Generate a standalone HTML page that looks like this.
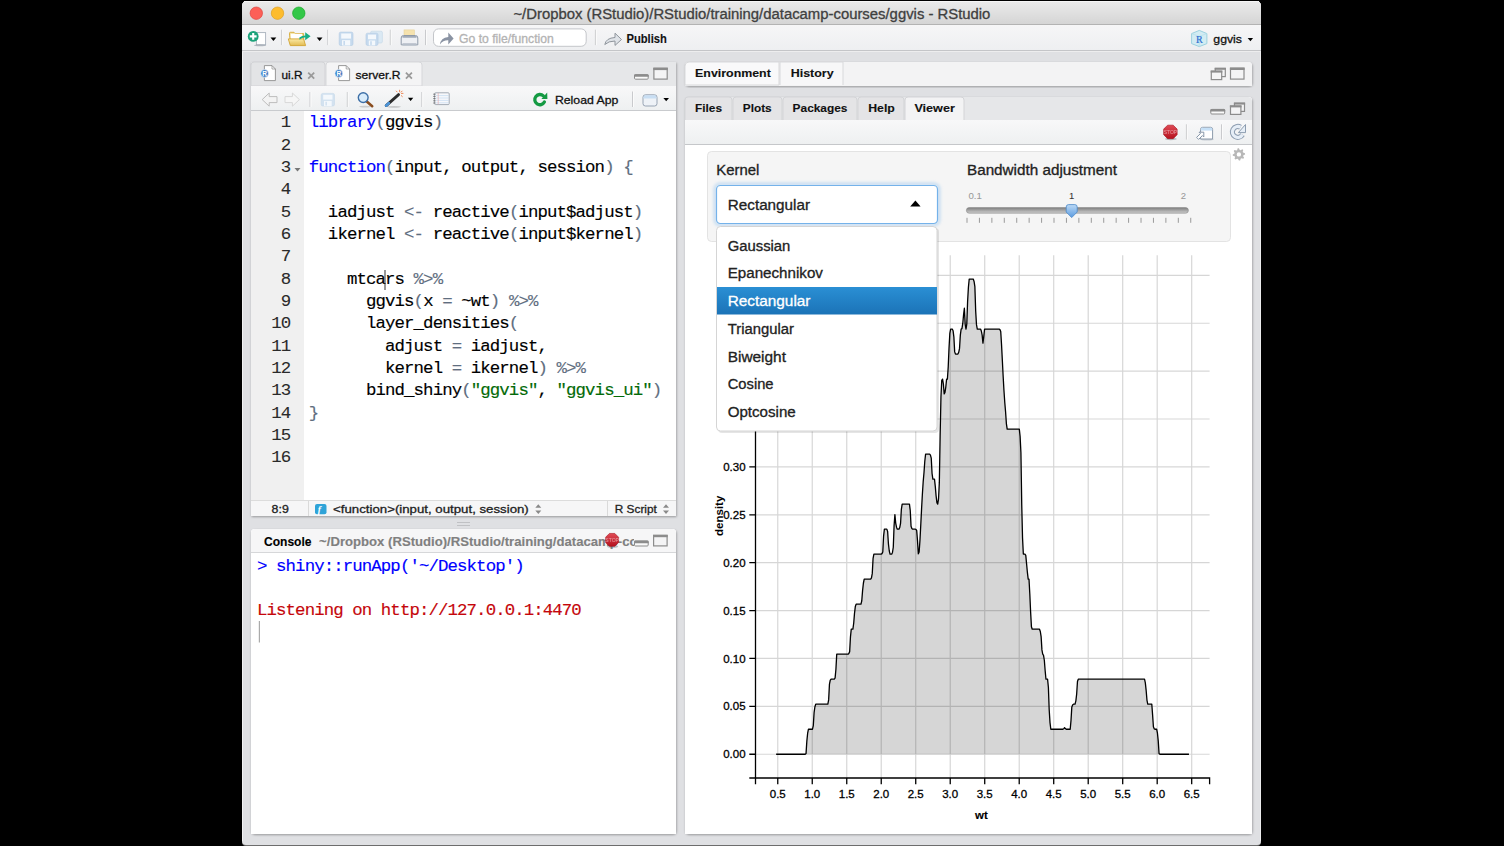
<!DOCTYPE html>
<html><head><meta charset="utf-8"><style>html,body{margin:0;padding:0;width:1504px;height:846px;overflow:hidden;background:#000}</style></head><body>
<svg width="1504" height="846" viewBox="0 0 1504 846" style="position:absolute;left:0;top:0" font-family='"Liberation Sans",sans-serif'>
<defs>
<linearGradient id="gTitle" x1="0" y1="0" x2="0" y2="1"><stop offset="0" stop-color="#ebebeb"/><stop offset="1" stop-color="#d5d5d5"/></linearGradient>
<linearGradient id="gTb" x1="0" y1="0" x2="0" y2="1"><stop offset="0" stop-color="#f6f6f7"/><stop offset="1" stop-color="#eeeff1"/></linearGradient>
<linearGradient id="gPTb" x1="0" y1="0" x2="0" y2="1"><stop offset="0" stop-color="#f8f8f9"/><stop offset="1" stop-color="#eef0f1"/></linearGradient>
<linearGradient id="gSel" x1="0" y1="0" x2="0" y2="1"><stop offset="0" stop-color="#2a8fd4"/><stop offset="1" stop-color="#1b73b7"/></linearGradient>
<linearGradient id="gStop" x1="0" y1="0" x2="0" y2="1"><stop offset="0" stop-color="#e04a55"/><stop offset="1" stop-color="#b5121f"/></linearGradient>
<linearGradient id="gFolder" x1="0" y1="0" x2="0" y2="1"><stop offset="0" stop-color="#fbeaa6"/><stop offset="1" stop-color="#e2bb52"/></linearGradient>
<linearGradient id="gSlider" x1="0" y1="0" x2="0" y2="1"><stop offset="0" stop-color="#7d7d7d"/><stop offset="1" stop-color="#cfcfcf"/></linearGradient>
<linearGradient id="gHandle" x1="0" y1="0" x2="0" y2="1"><stop offset="0" stop-color="#bcd9f5"/><stop offset="1" stop-color="#5a9be0"/></linearGradient>
<clipPath id="cpCon"><rect x="251" y="529" width="383" height="23"/></clipPath>
<filter id="glow" x="-10%" y="-30%" width="120%" height="160%"><feGaussianBlur stdDeviation="1.6"/></filter><filter id="sh" x="-5%" y="-5%" width="110%" height="110%"><feDropShadow dx="0.6" dy="1" stdDeviation="1.1" flood-color="#000" flood-opacity="0.32"/></filter>
</defs>
<rect x="0" y="0" width="1504" height="846" fill="#000" />
<path d="M242,842 V6 Q242,1 247,1 H1256 Q1261,1 1261,6 V842 Q1261,846 1257,846 H246 Q242,846 242,842 Z" fill="#6d6d6d"/>
<path d="M242,841 V6 Q242,1 247,1 H1256 Q1261,1 1261,6 V841 Q1261,845 1257,845 H246 Q242,845 242,841 Z" fill="#dfe0e3"/>
<path d="M242.5,841 V6" stroke="#f2f2f3" stroke-width="1"/>
<path d="M1260.5,841 V6" stroke="#ececed" stroke-width="1"/>
<path d="M242,24 V6 Q242,1 247,1 H1256 Q1261,1 1261,6 V24 Z" fill="url(#gTitle)"/>
<path d="M244,1.5 Q245,1.5 247,1.5 H1256 Q1258,1.5 1259,1.5" stroke="#f6f6f6" stroke-width="1"/>
<rect x="242" y="24" width="1019" height="1" fill="#b3b3b3" />
<circle cx="256.3" cy="13.2" r="6.2" fill="#fc5f57" stroke="#e0443e" stroke-width="0.7"/>
<circle cx="277.5" cy="13.2" r="6.2" fill="#fdbc2e" stroke="#dea123" stroke-width="0.7"/>
<circle cx="298.8" cy="13.2" r="6.2" fill="#33c748" stroke="#1aab29" stroke-width="0.7"/>
<text x="751.9" y="19.0" font-size="14" fill="#404040" text-anchor="middle" textLength="477" lengthAdjust="spacingAndGlyphs"  stroke="#404040" stroke-width="0.3">~/Dropbox (RStudio)/RStudio/training/datacamp-courses/ggvis - RStudio</text>
<rect x="242" y="25" width="1019" height="25" fill="url(#gTb)" />
<rect x="242" y="50" width="1019" height="1" fill="#c4c5c8" />
<rect x="242" y="51" width="1019" height="1" fill="#ededee" />
<rect x="256.4" y="32.6" width="9.2" height="12.2" fill="#fff" stroke="#a8b1bc" stroke-width="0.9"/>
<ellipse cx="260" cy="45.4" rx="6" ry="0.9" fill="#7d8896" opacity="0.5"/>
<circle cx="253.2" cy="36.4" r="5.4" fill="#1ca27a"/>
<path d="M253.2,33 V39.8 M249.8,36.4 H256.6" stroke="#fff" stroke-width="2.1"/>
<path d="M270.50,37.45 H276.30 L273.40,40.95 Z" fill="#000"/>
<rect x="281.2" y="29.7" width="1" height="15.400000000000002" fill="#c9cacd"/><rect x="282.2" y="29.7" width="1" height="15.400000000000002" fill="#fbfbfb"/>
<path d="M289.5,35.2 L289.5,33.2 Q289.5,32.3 290.4,32.3 H294 L295.3,33.6 H303.6 V44.8 H290.8 Z" fill="#f4e3a2" stroke="#d6a935" stroke-width="0.9"/>
<path d="M290.8,33.8 H302 V40 H290.8 Z" fill="#fff"/>
<path d="M288.3,38.9 H303.6 L305.6,45.6 H290.3 Z" fill="url(#gFolder)" stroke="#d2a432" stroke-width="0.9"/>
<path d="M299.4,37.5 Q302,35.5 305.2,35.5 V32.2 L310.6,36.3 L305.2,40.3 V37.3 Q302,37.3 299.4,39.8 Z" fill="#17ae83"/>
<path d="M316.70,37.45 H322.50 L319.60,40.95 Z" fill="#000"/>
<rect x="327.3" y="29.7" width="1" height="15.400000000000002" fill="#c9cacd"/><rect x="328.3" y="29.7" width="1" height="15.400000000000002" fill="#fbfbfb"/>
<rect x="339.2" y="32.1" width="13.8" height="13.4" rx="1.6" fill="#c6daee" stroke="#b3cbe3" stroke-width="0.6"/><rect x="341.2" y="33.5" width="9.8" height="5.09" fill="#f4f8fc"/><rect x="342.0" y="40.14" width="8.20" height="5.36" fill="#f4f8fc"/><rect x="343.4" y="40.94" width="1.6" height="4.02" fill="#c6daee"/>
<rect x="370.6" y="31.2" width="11.8" height="11.8" rx="1.4" fill="#dbe9f4" stroke="#c3d6e6" stroke-width="0.6"/>
<rect x="366" y="33.2" width="12" height="12.2" rx="1.6" fill="#c6daee" stroke="#b3cbe3" stroke-width="0.6"/><rect x="368" y="34.6" width="8" height="4.64" fill="#f4f8fc"/><rect x="368.8" y="40.52" width="6.40" height="4.88" fill="#f4f8fc"/><rect x="370.2" y="41.25" width="1.6" height="3.66" fill="#c6daee"/>
<rect x="389.8" y="29.7" width="1" height="15.400000000000002" fill="#c9cacd"/><rect x="390.8" y="29.7" width="1" height="15.400000000000002" fill="#fbfbfb"/>
<rect x="404" y="29.9" width="10.5" height="8.5" fill="#f5e2ae" stroke="#e4cf95" stroke-width="0.5"/>
<path d="M401.2,38 Q401.2,35.5 403.5,35.5 H415.5 Q417.8,35.5 417.8,38 V44.8 H401.2 Z" fill="#eef0f4" stroke="#8e99a8" stroke-width="1"/>
<rect x="402.5" y="36.2" width="14" height="1.4" fill="#8e99a8"/>
<rect x="402.5" y="43.2" width="14" height="2.4" fill="#b7bfca"/>
<rect x="425.0" y="29.7" width="1" height="15.400000000000002" fill="#c9cacd"/><rect x="426.0" y="29.7" width="1" height="15.400000000000002" fill="#fbfbfb"/>
<rect x="433.5" y="28.9" width="152.7" height="17.4" rx="5" fill="#fff" stroke="#c4c6ca" stroke-width="1"/>
<path d="M440,44.4 Q440.6,38 448.3,37 V32.4 L453.6,38.5 L448.3,44.5 V40.2 Q443,40 440,44.4 Z" fill="#8a93a3"/>
<text x="459" y="42.7" font-size="12" fill="#b3b3b3" textLength="94.8" lengthAdjust="spacingAndGlyphs" stroke="#b3b3b3" stroke-width="0.3">Go to file/function</text>
<rect x="594.9" y="29.7" width="1" height="15.400000000000002" fill="#c9cacd"/><rect x="595.9" y="29.7" width="1" height="15.400000000000002" fill="#fbfbfb"/>
<path d="M604.8,44.5 Q606,38 615,37.5 V33.2 L621.5,39.5 L615,45.4 V41 Q608.5,41 604.8,44.5 Z" fill="#dfe3e8" stroke="#8f959c" stroke-width="1"/>
<text x="626.5" y="42.7" font-size="12" font-weight="bold" fill="#111" textLength="40.4" lengthAdjust="spacingAndGlyphs" stroke="#111" stroke-width="0.12">Publish</text>
<path d="M1199.3,30.4 L1206.9,33.6 V43.6 L1199.3,46.6 L1191.6,43.6 V33.6 Z" fill="#d2ecf3" stroke="#9bd1df" stroke-width="1"/>
<path d="M1191.6,33.6 L1199.3,36.4 L1206.9,33.6 M1199.3,36.4 V46.6" stroke="#b5dfea" stroke-width="0.7" fill="none"/>
<text x="1199.3" y="42.6" font-size="10" fill="#2e6fd1" stroke="#2e6fd1" stroke-width="0.2" text-anchor="middle" font-family='"Liberation Serif",serif'>R</text>
<text x="1213.3" y="42.6" font-size="11.6" fill="#111" textLength="28.7" lengthAdjust="spacingAndGlyphs" stroke="#111" stroke-width="0.3">ggvis</text>
<path d="M1247.70,38.10 H1253.10 L1250.40,41.30 Z" fill="#000"/>
<rect x="251" y="62" width="425" height="454" fill="#fff" filter="url(#sh)"/>
<rect x="251" y="62" width="425" height="454" fill="#fff" />
<rect x="251" y="62" width="425" height="24" fill="#e6e7e9" />
<path d="M251,86 V65 Q251,62 254,62 H322 Q325,62 325,65 V86 Z" fill="#e3e4e6" stroke="#d2d3d6" stroke-width="1"/>
<path d="M326,86 V65 Q326,62 329,62 H419 Q422,62 422,65 V86 Z" fill="#f4f4f5" stroke="#d6d7da" stroke-width="1"/>
<text x="281.5" y="79.2" font-size="11.5" fill="#111" textLength="21" lengthAdjust="spacingAndGlyphs"  stroke="#111" stroke-width="0.3">ui.R</text>
<text x="355.5" y="79.2" font-size="11.5" fill="#111" textLength="45" lengthAdjust="spacingAndGlyphs"  stroke="#111" stroke-width="0.3">server.R</text>
<path d="M308.2,72.6 L314.2,78.6 M314.2,72.6 L308.2,78.6" stroke="#9a9a9a" stroke-width="1.8"/>
<path d="M405.9,72.6 L411.9,78.6 M411.9,72.6 L405.9,78.6" stroke="#9a9a9a" stroke-width="1.8"/>
<rect x="251" y="86" width="425" height="24" fill="url(#gPTb)" />
<rect x="251" y="110" width="425" height="1" fill="#c9cbce" />
<text x="554.9" y="103.8" font-size="11.6" fill="#111" textLength="63.5" lengthAdjust="spacingAndGlyphs"  stroke="#111" stroke-width="0.3">Reload App</text>
<rect x="251" y="111" width="53" height="389" fill="#f0f0f0" />
<text x="290.2" y="127.3" font-size="17.4" letter-spacing="-0.91" fill="#2a2a2a" stroke="#2a2a2a" stroke-width="0.1" text-anchor="end" font-family='"Liberation Mono",monospace'>1</text>
<text x="308.8" y="127.3" font-size="17.4" letter-spacing="-0.91" xml:space="preserve" font-family='"Liberation Mono",monospace'><tspan fill="#0000ff" stroke="#0000ff" stroke-width="0.15">library</tspan><tspan fill="#5f6e80" stroke="#5f6e80" stroke-width="0.15">(</tspan><tspan fill="#000" stroke="#000" stroke-width="0.15">ggvis</tspan><tspan fill="#5f6e80" stroke="#5f6e80" stroke-width="0.15">)</tspan></text>
<text x="290.2" y="149.6" font-size="17.4" letter-spacing="-0.91" fill="#2a2a2a" stroke="#2a2a2a" stroke-width="0.1" text-anchor="end" font-family='"Liberation Mono",monospace'>2</text>
<text x="290.2" y="172.0" font-size="17.4" letter-spacing="-0.91" fill="#2a2a2a" stroke="#2a2a2a" stroke-width="0.1" text-anchor="end" font-family='"Liberation Mono",monospace'>3</text>
<text x="308.8" y="172.0" font-size="17.4" letter-spacing="-0.91" xml:space="preserve" font-family='"Liberation Mono",monospace'><tspan fill="#0000ff" stroke="#0000ff" stroke-width="0.15">function</tspan><tspan fill="#5f6e80" stroke="#5f6e80" stroke-width="0.15">(</tspan><tspan fill="#000" stroke="#000" stroke-width="0.15">input, output, session</tspan><tspan fill="#5f6e80" stroke="#5f6e80" stroke-width="0.15">)</tspan><tspan fill="#000" stroke="#000" stroke-width="0.15"> </tspan><tspan fill="#5f6e80" stroke="#5f6e80" stroke-width="0.15">{</tspan></text>
<text x="290.2" y="194.3" font-size="17.4" letter-spacing="-0.91" fill="#2a2a2a" stroke="#2a2a2a" stroke-width="0.1" text-anchor="end" font-family='"Liberation Mono",monospace'>4</text>
<text x="290.2" y="216.6" font-size="17.4" letter-spacing="-0.91" fill="#2a2a2a" stroke="#2a2a2a" stroke-width="0.1" text-anchor="end" font-family='"Liberation Mono",monospace'>5</text>
<text x="308.8" y="216.6" font-size="17.4" letter-spacing="-0.91" xml:space="preserve" font-family='"Liberation Mono",monospace'><tspan fill="#000" stroke="#000" stroke-width="0.15">  iadjust </tspan><tspan fill="#5f6e80" stroke="#5f6e80" stroke-width="0.15">&lt;-</tspan><tspan fill="#000" stroke="#000" stroke-width="0.15"> reactive</tspan><tspan fill="#5f6e80" stroke="#5f6e80" stroke-width="0.15">(</tspan><tspan fill="#000" stroke="#000" stroke-width="0.15">input$adjust</tspan><tspan fill="#5f6e80" stroke="#5f6e80" stroke-width="0.15">)</tspan></text>
<text x="290.2" y="238.9" font-size="17.4" letter-spacing="-0.91" fill="#2a2a2a" stroke="#2a2a2a" stroke-width="0.1" text-anchor="end" font-family='"Liberation Mono",monospace'>6</text>
<text x="308.8" y="238.9" font-size="17.4" letter-spacing="-0.91" xml:space="preserve" font-family='"Liberation Mono",monospace'><tspan fill="#000" stroke="#000" stroke-width="0.15">  ikernel </tspan><tspan fill="#5f6e80" stroke="#5f6e80" stroke-width="0.15">&lt;-</tspan><tspan fill="#000" stroke="#000" stroke-width="0.15"> reactive</tspan><tspan fill="#5f6e80" stroke="#5f6e80" stroke-width="0.15">(</tspan><tspan fill="#000" stroke="#000" stroke-width="0.15">input$kernel</tspan><tspan fill="#5f6e80" stroke="#5f6e80" stroke-width="0.15">)</tspan></text>
<text x="290.2" y="261.3" font-size="17.4" letter-spacing="-0.91" fill="#2a2a2a" stroke="#2a2a2a" stroke-width="0.1" text-anchor="end" font-family='"Liberation Mono",monospace'>7</text>
<text x="290.2" y="283.6" font-size="17.4" letter-spacing="-0.91" fill="#2a2a2a" stroke="#2a2a2a" stroke-width="0.1" text-anchor="end" font-family='"Liberation Mono",monospace'>8</text>
<text x="308.8" y="283.6" font-size="17.4" letter-spacing="-0.91" xml:space="preserve" font-family='"Liberation Mono",monospace'><tspan fill="#000" stroke="#000" stroke-width="0.15">    mtcars </tspan><tspan fill="#5f6e80" stroke="#5f6e80" stroke-width="0.15">%&gt;%</tspan></text>
<text x="290.2" y="305.9" font-size="17.4" letter-spacing="-0.91" fill="#2a2a2a" stroke="#2a2a2a" stroke-width="0.1" text-anchor="end" font-family='"Liberation Mono",monospace'>9</text>
<text x="308.8" y="305.9" font-size="17.4" letter-spacing="-0.91" xml:space="preserve" font-family='"Liberation Mono",monospace'><tspan fill="#000" stroke="#000" stroke-width="0.15">      ggvis</tspan><tspan fill="#5f6e80" stroke="#5f6e80" stroke-width="0.15">(</tspan><tspan fill="#000" stroke="#000" stroke-width="0.15">x </tspan><tspan fill="#5f6e80" stroke="#5f6e80" stroke-width="0.15">=</tspan><tspan fill="#000" stroke="#000" stroke-width="0.15"> ~wt</tspan><tspan fill="#5f6e80" stroke="#5f6e80" stroke-width="0.15">)</tspan><tspan fill="#000" stroke="#000" stroke-width="0.15"> </tspan><tspan fill="#5f6e80" stroke="#5f6e80" stroke-width="0.15">%&gt;%</tspan></text>
<text x="290.2" y="328.3" font-size="17.4" letter-spacing="-0.91" fill="#2a2a2a" stroke="#2a2a2a" stroke-width="0.1" text-anchor="end" font-family='"Liberation Mono",monospace'>10</text>
<text x="308.8" y="328.3" font-size="17.4" letter-spacing="-0.91" xml:space="preserve" font-family='"Liberation Mono",monospace'><tspan fill="#000" stroke="#000" stroke-width="0.15">      layer_densities</tspan><tspan fill="#5f6e80" stroke="#5f6e80" stroke-width="0.15">(</tspan></text>
<text x="290.2" y="350.6" font-size="17.4" letter-spacing="-0.91" fill="#2a2a2a" stroke="#2a2a2a" stroke-width="0.1" text-anchor="end" font-family='"Liberation Mono",monospace'>11</text>
<text x="308.8" y="350.6" font-size="17.4" letter-spacing="-0.91" xml:space="preserve" font-family='"Liberation Mono",monospace'><tspan fill="#000" stroke="#000" stroke-width="0.15">        adjust </tspan><tspan fill="#5f6e80" stroke="#5f6e80" stroke-width="0.15">=</tspan><tspan fill="#000" stroke="#000" stroke-width="0.15"> iadjust,</tspan></text>
<text x="290.2" y="372.9" font-size="17.4" letter-spacing="-0.91" fill="#2a2a2a" stroke="#2a2a2a" stroke-width="0.1" text-anchor="end" font-family='"Liberation Mono",monospace'>12</text>
<text x="308.8" y="372.9" font-size="17.4" letter-spacing="-0.91" xml:space="preserve" font-family='"Liberation Mono",monospace'><tspan fill="#000" stroke="#000" stroke-width="0.15">        kernel </tspan><tspan fill="#5f6e80" stroke="#5f6e80" stroke-width="0.15">=</tspan><tspan fill="#000" stroke="#000" stroke-width="0.15"> ikernel</tspan><tspan fill="#5f6e80" stroke="#5f6e80" stroke-width="0.15">)</tspan><tspan fill="#000" stroke="#000" stroke-width="0.15"> </tspan><tspan fill="#5f6e80" stroke="#5f6e80" stroke-width="0.15">%&gt;%</tspan></text>
<text x="290.2" y="395.3" font-size="17.4" letter-spacing="-0.91" fill="#2a2a2a" stroke="#2a2a2a" stroke-width="0.1" text-anchor="end" font-family='"Liberation Mono",monospace'>13</text>
<text x="308.8" y="395.3" font-size="17.4" letter-spacing="-0.91" xml:space="preserve" font-family='"Liberation Mono",monospace'><tspan fill="#000" stroke="#000" stroke-width="0.15">      bind_shiny</tspan><tspan fill="#5f6e80" stroke="#5f6e80" stroke-width="0.15">(</tspan><tspan fill="#036a07" stroke="#036a07" stroke-width="0.15">"ggvis"</tspan><tspan fill="#000" stroke="#000" stroke-width="0.15">, </tspan><tspan fill="#036a07" stroke="#036a07" stroke-width="0.15">"ggvis_ui"</tspan><tspan fill="#5f6e80" stroke="#5f6e80" stroke-width="0.15">)</tspan></text>
<text x="290.2" y="417.6" font-size="17.4" letter-spacing="-0.91" fill="#2a2a2a" stroke="#2a2a2a" stroke-width="0.1" text-anchor="end" font-family='"Liberation Mono",monospace'>14</text>
<text x="308.8" y="417.6" font-size="17.4" letter-spacing="-0.91" xml:space="preserve" font-family='"Liberation Mono",monospace'><tspan fill="#5f6e80" stroke="#5f6e80" stroke-width="0.15">}</tspan></text>
<text x="290.2" y="439.9" font-size="17.4" letter-spacing="-0.91" fill="#2a2a2a" stroke="#2a2a2a" stroke-width="0.1" text-anchor="end" font-family='"Liberation Mono",monospace'>15</text>
<text x="290.2" y="462.2" font-size="17.4" letter-spacing="-0.91" fill="#2a2a2a" stroke="#2a2a2a" stroke-width="0.1" text-anchor="end" font-family='"Liberation Mono",monospace'>16</text>
<path d="M294.5,168 L300.5,168 L297.5,171.5 Z" fill="#777"/>
<rect x="384.5" y="270" width="1" height="20" fill="#333"/>
<rect x="251" y="500" width="425" height="1" fill="#dcdcdc" />
<rect x="251" y="501" width="425" height="15" fill="#f6f6f7" />
<rect x="308" y="501" width="1" height="15" fill="#dadada" />
<rect x="607" y="501" width="1" height="15" fill="#dadada" />
<text x="271.6" y="513" font-size="11" fill="#222" textLength="17.2" lengthAdjust="spacingAndGlyphs"  stroke="#222" stroke-width="0.3">8:9</text>
<rect x="315" y="504" width="11.5" height="10.2" rx="2" fill="#2fa3d8"/>
<text x="317.8" y="512.6" font-size="9.5" font-style="italic" font-weight="bold" fill="#fff" font-family='"Liberation Serif",serif' stroke="#fff" stroke-width="0.05">f</text>
<text x="333.1" y="513" font-size="11" fill="#222" textLength="195.7" lengthAdjust="spacingAndGlyphs"  stroke="#222" stroke-width="0.3">&lt;function&gt;(input, output, session)</text>
<text x="614.8" y="513" font-size="11" fill="#222" textLength="42" lengthAdjust="spacingAndGlyphs"  stroke="#222" stroke-width="0.3">R Script</text>
<path d="M535.3,507.8 L538.3,504.3 L541.3,507.8 Z M535.3,510.6 L538.3,514.1 L541.3,510.6 Z" fill="#8a8a8a"/>
<path d="M663,507.8 L666,504.3 L669,507.8 Z M663,510.6 L666,514.1 L669,510.6 Z" fill="#8a8a8a"/>
<rect x="457" y="522" width="13" height="1" fill="#c0c1c4" />
<rect x="457" y="525" width="13" height="1" fill="#c0c1c4" />
<rect x="251" y="529" width="425" height="305" fill="#fff" rx="4" filter="url(#sh)"/>
<path d="M251,834 V533 Q251,529 255,529 H672 Q676,529 676,533 V834 Z" fill="#fff"/>
<path d="M251,552 V533 Q251,529 255,529 H672 Q676,529 676,533 V552 Z" fill="#f6f6f7"/>
<rect x="251" y="552" width="425" height="1" fill="#d6d7d9" />
<text x="264" y="546" font-size="12" fill="#000" font-weight="bold" textLength="47.5" lengthAdjust="spacingAndGlyphs"  stroke="#000" stroke-width="0.12">Console</text>
<text x="319.1" y="546" font-size="12" fill="#808080" font-weight="bold" textLength="395" lengthAdjust="spacingAndGlyphs" clip-path="url(#cpCon)" stroke="#808080" stroke-width="0.12">~/Dropbox (RStudio)/RStudio/training/datacamp-courses/ggvis/</text>
<text x="257" y="571" font-size="17.4" letter-spacing="-0.91" fill="#0000ff" stroke="#0000ff" stroke-width="0.15" xml:space="preserve" font-family='"Liberation Mono",monospace'>&gt; shiny::runApp('~/Desktop')</text>
<text x="257" y="614.7" font-size="17.4" letter-spacing="-0.91" fill="#c5060b" stroke="#c5060b" stroke-width="0.15" xml:space="preserve" font-family='"Liberation Mono",monospace'>Listening on http://127.0.0.1:4470</text>
<rect x="258.8" y="621" width="1.2" height="21.5" fill="#aaa"/>
<rect x="685" y="62" width="567" height="24" fill="#fff" rx="4" filter="url(#sh)"/>
<path d="M685,86 V66 Q685,62 689,62 H1248 Q1252,62 1252,66 V86 Z" fill="#f3f3f4"/>
<path d="M685,85 V66 Q685,62 689,62 H779 V85 Z" fill="#f9f9fa" stroke="#d8d9db" stroke-width="1"/>
<path d="M780,85 V62 H843 V85" fill="#f7f7f8" stroke="#d8d9db" stroke-width="1"/>
<text x="695.1" y="76.8" font-size="11.6" fill="#111" font-weight="bold" textLength="75.7" lengthAdjust="spacingAndGlyphs"  stroke="#111" stroke-width="0.12">Environment</text>
<text x="790.7" y="76.8" font-size="11.6" fill="#111" font-weight="bold" textLength="42.9" lengthAdjust="spacingAndGlyphs"  stroke="#111" stroke-width="0.12">History</text>
<rect x="685" y="97" width="567" height="737" fill="#fff" rx="4" filter="url(#sh)"/>
<path d="M685,834 V101 Q685,97 689,97 H1248 Q1252,97 1252,101 V834 Z" fill="#fff"/>
<path d="M685,120 V101 Q685,97 689,97 H1248 Q1252,97 1252,101 V120 Z" fill="#e6e7e9"/>
<path d="M685,120 V100 Q685,97 688,97 H729 Q732,97 732,100 V120" fill="#e4e4e6" stroke="#d3d4d7" stroke-width="1"/>
<text x="695" y="111.8" font-size="11.6" fill="#111" font-weight="bold" textLength="27" lengthAdjust="spacingAndGlyphs"  stroke="#111" stroke-width="0.12">Files</text>
<path d="M733,120 V100 Q733,97 736,97 H779 Q782,97 782,100 V120" fill="#e4e4e6" stroke="#d3d4d7" stroke-width="1"/>
<text x="742.8" y="111.8" font-size="11.6" fill="#111" font-weight="bold" textLength="28.9" lengthAdjust="spacingAndGlyphs"  stroke="#111" stroke-width="0.12">Plots</text>
<path d="M783,120 V100 Q783,97 786,97 H854 Q857,97 857,100 V120" fill="#e4e4e6" stroke="#d3d4d7" stroke-width="1"/>
<text x="792.6" y="111.8" font-size="11.6" fill="#111" font-weight="bold" textLength="54.9" lengthAdjust="spacingAndGlyphs"  stroke="#111" stroke-width="0.12">Packages</text>
<path d="M858,120 V100 Q858,97 861,97 H901 Q904,97 904,100 V120" fill="#e4e4e6" stroke="#d3d4d7" stroke-width="1"/>
<text x="868.2" y="111.8" font-size="11.6" fill="#111" font-weight="bold" textLength="26.6" lengthAdjust="spacingAndGlyphs"  stroke="#111" stroke-width="0.12">Help</text>
<path d="M905,120 V100 Q905,97 908,97 H961 Q964,97 964,100 V120" fill="#f3f3f4" stroke="#d3d4d7" stroke-width="1"/>
<text x="914.4" y="111.8" font-size="11.6" fill="#111" font-weight="bold" textLength="40.5" lengthAdjust="spacingAndGlyphs"  stroke="#111" stroke-width="0.12">Viewer</text>
<rect x="685" y="120" width="567" height="24" fill="url(#gPTb)" />
<rect x="685" y="144" width="567" height="1" fill="#c5c7ca" />
<path d="M776.14,754.24 L776.14,754.24 L776.95,754.24 L777.76,754.24 L778.56,754.24 L779.37,754.24 L780.18,754.24 L780.99,754.24 L781.80,754.24 L782.60,754.24 L783.41,754.24 L784.22,754.24 L785.03,754.24 L785.84,754.24 L786.64,754.24 L787.45,754.24 L788.26,754.24 L789.07,754.24 L789.87,754.24 L790.68,754.24 L791.49,754.24 L792.30,754.24 L793.11,754.24 L793.91,754.24 L794.72,754.24 L795.53,754.24 L796.34,754.24 L797.15,754.24 L797.95,754.24 L798.76,754.24 L799.57,754.24 L800.38,754.24 L801.18,754.24 L801.99,754.24 L802.80,754.24 L803.61,754.24 L804.42,754.24 L805.22,754.24 L806.03,753.61 L806.84,741.09 L807.65,733.24 L808.46,729.23 L809.26,729.23 L810.07,729.23 L810.88,729.23 L811.69,729.23 L812.49,729.23 L813.30,725.54 L814.11,712.30 L814.92,706.72 L815.73,704.22 L816.53,704.22 L817.34,704.22 L818.15,704.22 L818.96,704.22 L819.77,704.22 L820.57,704.22 L821.38,704.22 L822.19,704.22 L823.00,704.22 L823.80,704.22 L824.61,704.22 L825.42,704.22 L826.23,704.22 L827.04,704.22 L827.84,704.22 L828.65,699.88 L829.46,684.11 L830.27,680.08 L831.08,679.21 L831.88,679.21 L832.69,679.21 L833.50,679.21 L834.31,679.21 L835.11,677.88 L835.92,669.28 L836.73,654.20 L837.54,654.20 L838.35,654.20 L839.15,654.20 L839.96,654.20 L840.77,654.20 L841.58,654.20 L842.39,654.20 L843.19,654.20 L844.00,654.20 L844.81,654.20 L845.62,654.20 L846.43,654.20 L847.23,654.20 L848.04,654.20 L848.85,653.44 L849.66,651.64 L850.46,636.86 L851.27,629.19 L852.08,629.19 L852.89,629.19 L853.70,623.28 L854.50,613.40 L855.31,606.57 L856.12,604.18 L856.93,604.18 L857.74,604.18 L858.54,604.18 L859.35,604.18 L860.16,604.18 L860.97,604.18 L861.77,600.73 L862.58,590.63 L863.39,583.25 L864.20,579.17 L865.01,579.17 L865.81,579.17 L866.62,579.17 L867.43,579.17 L868.24,579.17 L869.05,579.17 L869.85,579.17 L870.66,579.17 L871.47,577.84 L872.28,573.38 L873.08,558.32 L873.89,554.16 L874.70,554.16 L875.51,554.16 L876.32,554.16 L877.12,554.16 L877.93,554.16 L878.74,554.16 L879.55,554.16 L880.36,554.16 L881.16,554.16 L881.97,553.61 L882.78,552.06 L883.59,536.08 L884.39,529.15 L885.20,529.15 L886.01,529.15 L886.82,529.15 L887.63,531.42 L888.43,543.94 L889.24,550.76 L890.05,554.16 L890.86,554.16 L891.67,554.16 L892.47,552.43 L893.28,547.24 L894.09,525.46 L894.90,514.62 L895.70,523.05 L896.51,527.16 L897.32,529.15 L898.13,529.15 L898.94,529.15 L899.74,527.52 L900.55,523.48 L901.36,509.28 L902.17,504.15 L902.98,504.15 L903.78,504.15 L904.59,504.15 L905.40,504.15 L906.21,504.15 L907.01,504.15 L907.82,504.15 L908.63,504.15 L909.44,504.15 L910.25,510.54 L911.05,526.31 L911.86,528.46 L912.67,529.15 L913.48,529.15 L914.29,529.15 L915.09,529.15 L915.90,529.29 L916.71,530.66 L917.52,541.14 L918.32,553.85 L919.13,552.05 L919.94,540.66 L920.75,525.17 L921.56,509.14 L922.36,494.53 L923.17,481.92 L923.98,472.69 L924.79,461.21 L925.60,454.13 L926.40,454.13 L927.21,454.13 L928.02,454.13 L928.83,454.13 L929.63,454.13 L930.44,455.12 L931.25,458.16 L932.06,473.47 L932.87,479.14 L933.67,479.14 L934.48,479.14 L935.29,486.39 L936.10,495.82 L936.91,502.66 L937.71,504.15 L938.52,498.93 L939.33,482.65 L940.14,435.57 L940.95,397.34 L941.75,380.30 L942.56,379.13 L943.37,383.87 L944.18,393.85 L944.98,392.44 L945.79,387.04 L946.60,379.10 L947.41,379.10 L948.22,366.88 L949.02,348.14 L949.83,333.46 L950.64,329.08 L951.45,329.08 L952.26,329.08 L953.06,330.68 L953.87,336.84 L954.68,351.89 L955.49,354.09 L956.29,354.09 L957.10,354.09 L957.91,354.09 L958.72,352.29 L959.53,348.39 L960.33,335.12 L961.14,329.08 L961.95,328.65 L962.76,323.46 L963.57,314.79 L964.37,308.25 L965.18,324.24 L965.99,329.08 L966.80,323.82 L967.60,301.50 L968.41,287.24 L969.22,279.06 L970.03,279.06 L970.84,279.06 L971.64,279.06 L972.45,279.06 L973.26,279.06 L974.07,281.47 L974.88,286.70 L975.68,310.92 L976.49,324.65 L977.30,329.08 L978.11,329.08 L978.91,329.08 L979.72,329.08 L980.53,329.08 L981.34,331.09 L982.15,335.17 L982.95,343.16 L983.76,336.63 L984.57,329.08 L985.38,329.08 L986.19,329.08 L986.99,329.08 L987.80,329.08 L988.61,329.08 L989.42,329.08 L990.22,329.08 L991.03,329.08 L991.84,329.08 L992.65,329.08 L993.46,329.08 L994.26,329.08 L995.07,329.08 L995.88,329.08 L996.69,329.08 L997.50,329.08 L998.30,329.08 L999.11,329.08 L999.92,329.62 L1000.73,331.43 L1001.53,344.58 L1002.34,360.16 L1003.15,376.20 L1003.96,390.57 L1004.77,402.53 L1005.57,411.76 L1006.38,423.57 L1007.19,429.12 L1008.00,429.12 L1008.81,429.12 L1009.61,429.12 L1010.42,429.12 L1011.23,429.12 L1012.04,429.12 L1012.84,429.12 L1013.65,429.12 L1014.46,429.12 L1015.27,429.12 L1016.08,429.12 L1016.88,429.12 L1017.69,429.12 L1018.50,429.12 L1019.31,429.12 L1020.12,436.46 L1020.92,452.73 L1021.73,504.49 L1022.54,538.14 L1023.35,554.08 L1024.15,554.14 L1024.96,554.16 L1025.77,555.35 L1026.58,563.76 L1027.39,572.37 L1028.19,579.17 L1029.00,579.17 L1029.81,593.94 L1030.62,612.04 L1031.43,626.73 L1032.23,629.19 L1033.04,629.19 L1033.85,629.19 L1034.66,629.19 L1035.47,629.19 L1036.27,629.19 L1037.08,629.19 L1037.89,629.19 L1038.70,629.19 L1039.50,629.19 L1040.31,631.49 L1041.12,636.62 L1041.93,649.89 L1042.74,654.20 L1043.54,655.31 L1044.35,660.50 L1045.16,670.75 L1045.97,679.21 L1046.78,679.21 L1047.58,679.21 L1048.39,687.38 L1049.20,709.71 L1050.01,722.60 L1050.81,729.23 L1051.62,729.23 L1052.43,729.23 L1053.24,729.23 L1054.05,729.23 L1054.85,729.23 L1055.66,729.23 L1056.47,729.23 L1057.28,729.23 L1058.09,729.23 L1058.89,729.23 L1059.70,729.23 L1060.51,729.23 L1061.32,729.23 L1062.12,729.23 L1062.93,729.23 L1063.74,728.80 L1064.55,727.61 L1065.36,728.56 L1066.16,729.23 L1066.97,729.23 L1067.78,729.23 L1068.59,729.23 L1069.40,729.23 L1070.20,729.23 L1071.01,720.32 L1071.82,706.89 L1072.63,704.89 L1073.43,704.22 L1074.24,704.22 L1075.05,704.22 L1075.86,700.81 L1076.67,694.00 L1077.47,681.48 L1078.28,679.21 L1079.09,679.21 L1079.90,679.21 L1080.71,679.21 L1081.51,679.21 L1082.32,679.21 L1083.13,679.21 L1083.94,679.21 L1084.74,679.21 L1085.55,679.21 L1086.36,679.21 L1087.17,679.21 L1087.98,679.21 L1088.78,679.21 L1089.59,679.21 L1090.40,679.21 L1091.21,679.21 L1092.02,679.21 L1092.82,679.21 L1093.63,679.21 L1094.44,679.21 L1095.25,679.21 L1096.05,679.21 L1096.86,679.21 L1097.67,679.21 L1098.48,679.21 L1099.29,679.21 L1100.09,679.21 L1100.90,679.21 L1101.71,679.21 L1102.52,679.21 L1103.33,679.21 L1104.13,679.21 L1104.94,679.21 L1105.75,679.21 L1106.56,679.21 L1107.36,679.21 L1108.17,679.21 L1108.98,679.21 L1109.79,679.21 L1110.60,679.21 L1111.40,679.21 L1112.21,679.21 L1113.02,679.21 L1113.83,679.21 L1114.64,679.21 L1115.44,679.21 L1116.25,679.21 L1117.06,679.21 L1117.87,679.21 L1118.67,679.21 L1119.48,679.21 L1120.29,679.21 L1121.10,679.21 L1121.91,679.21 L1122.71,679.21 L1123.52,679.21 L1124.33,679.21 L1125.14,679.21 L1125.95,679.21 L1126.75,679.21 L1127.56,679.21 L1128.37,679.21 L1129.18,679.21 L1129.99,679.21 L1130.79,679.21 L1131.60,679.21 L1132.41,679.21 L1133.22,679.21 L1134.02,679.21 L1134.83,679.21 L1135.64,679.21 L1136.45,679.21 L1137.26,679.21 L1138.06,679.21 L1138.87,679.21 L1139.68,679.21 L1140.49,679.21 L1141.30,679.21 L1142.10,679.21 L1142.91,679.21 L1143.72,679.21 L1144.53,679.21 L1145.33,682.85 L1146.14,690.32 L1146.95,700.03 L1147.76,704.22 L1148.57,704.22 L1149.37,704.22 L1150.18,704.22 L1150.99,704.22 L1151.80,704.22 L1152.61,715.11 L1153.41,726.82 L1154.22,728.83 L1155.03,729.23 L1155.84,729.23 L1156.64,729.23 L1157.45,733.24 L1158.26,741.09 L1159.07,753.61 L1159.88,754.24 L1160.68,754.24 L1161.49,754.24 L1162.30,754.24 L1163.11,754.24 L1163.92,754.24 L1164.72,754.24 L1165.53,754.24 L1166.34,754.24 L1167.15,754.24 L1167.95,754.24 L1168.76,754.24 L1169.57,754.24 L1170.38,754.24 L1171.19,754.24 L1171.99,754.24 L1172.80,754.24 L1173.61,754.24 L1174.42,754.24 L1175.23,754.24 L1176.03,754.24 L1176.84,754.24 L1177.65,754.24 L1178.46,754.24 L1179.26,754.24 L1180.07,754.24 L1180.88,754.24 L1181.69,754.24 L1182.50,754.24 L1183.30,754.24 L1184.11,754.24 L1184.92,754.24 L1185.73,754.24 L1186.54,754.24 L1187.34,754.24 L1188.15,754.24 L1188.96,754.24 L1188.96,754.24 Z" fill="#333" fill-opacity="0.2"/>
<path d="M777.76,255.3V778.0M812.25,255.3V778.0M846.75,255.3V778.0M881.24,255.3V778.0M915.73,255.3V778.0M950.23,255.3V778.0M984.72,255.3V778.0M1019.22,255.3V778.0M1053.71,255.3V778.0M1088.21,255.3V778.0M1122.70,255.3V778.0M1157.19,255.3V778.0M1191.69,255.3V778.0M755.5,754.24H1209.6M755.5,706.35H1209.6M755.5,658.46H1209.6M755.5,610.57H1209.6M755.5,562.69H1209.6M755.5,514.80H1209.6M755.5,466.91H1209.6M755.5,419.02H1209.6M755.5,371.13H1209.6M755.5,323.24H1209.6M755.5,275.35H1209.6" stroke="#000" stroke-opacity="0.16" stroke-width="1.2" fill="none"/>
<path d="M776.14,754.24 L776.95,754.24 L777.76,754.24 L778.56,754.24 L779.37,754.24 L780.18,754.24 L780.99,754.24 L781.80,754.24 L782.60,754.24 L783.41,754.24 L784.22,754.24 L785.03,754.24 L785.84,754.24 L786.64,754.24 L787.45,754.24 L788.26,754.24 L789.07,754.24 L789.87,754.24 L790.68,754.24 L791.49,754.24 L792.30,754.24 L793.11,754.24 L793.91,754.24 L794.72,754.24 L795.53,754.24 L796.34,754.24 L797.15,754.24 L797.95,754.24 L798.76,754.24 L799.57,754.24 L800.38,754.24 L801.18,754.24 L801.99,754.24 L802.80,754.24 L803.61,754.24 L804.42,754.24 L805.22,754.24 L806.03,753.61 L806.84,741.09 L807.65,733.24 L808.46,729.23 L809.26,729.23 L810.07,729.23 L810.88,729.23 L811.69,729.23 L812.49,729.23 L813.30,725.54 L814.11,712.30 L814.92,706.72 L815.73,704.22 L816.53,704.22 L817.34,704.22 L818.15,704.22 L818.96,704.22 L819.77,704.22 L820.57,704.22 L821.38,704.22 L822.19,704.22 L823.00,704.22 L823.80,704.22 L824.61,704.22 L825.42,704.22 L826.23,704.22 L827.04,704.22 L827.84,704.22 L828.65,699.88 L829.46,684.11 L830.27,680.08 L831.08,679.21 L831.88,679.21 L832.69,679.21 L833.50,679.21 L834.31,679.21 L835.11,677.88 L835.92,669.28 L836.73,654.20 L837.54,654.20 L838.35,654.20 L839.15,654.20 L839.96,654.20 L840.77,654.20 L841.58,654.20 L842.39,654.20 L843.19,654.20 L844.00,654.20 L844.81,654.20 L845.62,654.20 L846.43,654.20 L847.23,654.20 L848.04,654.20 L848.85,653.44 L849.66,651.64 L850.46,636.86 L851.27,629.19 L852.08,629.19 L852.89,629.19 L853.70,623.28 L854.50,613.40 L855.31,606.57 L856.12,604.18 L856.93,604.18 L857.74,604.18 L858.54,604.18 L859.35,604.18 L860.16,604.18 L860.97,604.18 L861.77,600.73 L862.58,590.63 L863.39,583.25 L864.20,579.17 L865.01,579.17 L865.81,579.17 L866.62,579.17 L867.43,579.17 L868.24,579.17 L869.05,579.17 L869.85,579.17 L870.66,579.17 L871.47,577.84 L872.28,573.38 L873.08,558.32 L873.89,554.16 L874.70,554.16 L875.51,554.16 L876.32,554.16 L877.12,554.16 L877.93,554.16 L878.74,554.16 L879.55,554.16 L880.36,554.16 L881.16,554.16 L881.97,553.61 L882.78,552.06 L883.59,536.08 L884.39,529.15 L885.20,529.15 L886.01,529.15 L886.82,529.15 L887.63,531.42 L888.43,543.94 L889.24,550.76 L890.05,554.16 L890.86,554.16 L891.67,554.16 L892.47,552.43 L893.28,547.24 L894.09,525.46 L894.90,514.62 L895.70,523.05 L896.51,527.16 L897.32,529.15 L898.13,529.15 L898.94,529.15 L899.74,527.52 L900.55,523.48 L901.36,509.28 L902.17,504.15 L902.98,504.15 L903.78,504.15 L904.59,504.15 L905.40,504.15 L906.21,504.15 L907.01,504.15 L907.82,504.15 L908.63,504.15 L909.44,504.15 L910.25,510.54 L911.05,526.31 L911.86,528.46 L912.67,529.15 L913.48,529.15 L914.29,529.15 L915.09,529.15 L915.90,529.29 L916.71,530.66 L917.52,541.14 L918.32,553.85 L919.13,552.05 L919.94,540.66 L920.75,525.17 L921.56,509.14 L922.36,494.53 L923.17,481.92 L923.98,472.69 L924.79,461.21 L925.60,454.13 L926.40,454.13 L927.21,454.13 L928.02,454.13 L928.83,454.13 L929.63,454.13 L930.44,455.12 L931.25,458.16 L932.06,473.47 L932.87,479.14 L933.67,479.14 L934.48,479.14 L935.29,486.39 L936.10,495.82 L936.91,502.66 L937.71,504.15 L938.52,498.93 L939.33,482.65 L940.14,435.57 L940.95,397.34 L941.75,380.30 L942.56,379.13 L943.37,383.87 L944.18,393.85 L944.98,392.44 L945.79,387.04 L946.60,379.10 L947.41,379.10 L948.22,366.88 L949.02,348.14 L949.83,333.46 L950.64,329.08 L951.45,329.08 L952.26,329.08 L953.06,330.68 L953.87,336.84 L954.68,351.89 L955.49,354.09 L956.29,354.09 L957.10,354.09 L957.91,354.09 L958.72,352.29 L959.53,348.39 L960.33,335.12 L961.14,329.08 L961.95,328.65 L962.76,323.46 L963.57,314.79 L964.37,308.25 L965.18,324.24 L965.99,329.08 L966.80,323.82 L967.60,301.50 L968.41,287.24 L969.22,279.06 L970.03,279.06 L970.84,279.06 L971.64,279.06 L972.45,279.06 L973.26,279.06 L974.07,281.47 L974.88,286.70 L975.68,310.92 L976.49,324.65 L977.30,329.08 L978.11,329.08 L978.91,329.08 L979.72,329.08 L980.53,329.08 L981.34,331.09 L982.15,335.17 L982.95,343.16 L983.76,336.63 L984.57,329.08 L985.38,329.08 L986.19,329.08 L986.99,329.08 L987.80,329.08 L988.61,329.08 L989.42,329.08 L990.22,329.08 L991.03,329.08 L991.84,329.08 L992.65,329.08 L993.46,329.08 L994.26,329.08 L995.07,329.08 L995.88,329.08 L996.69,329.08 L997.50,329.08 L998.30,329.08 L999.11,329.08 L999.92,329.62 L1000.73,331.43 L1001.53,344.58 L1002.34,360.16 L1003.15,376.20 L1003.96,390.57 L1004.77,402.53 L1005.57,411.76 L1006.38,423.57 L1007.19,429.12 L1008.00,429.12 L1008.81,429.12 L1009.61,429.12 L1010.42,429.12 L1011.23,429.12 L1012.04,429.12 L1012.84,429.12 L1013.65,429.12 L1014.46,429.12 L1015.27,429.12 L1016.08,429.12 L1016.88,429.12 L1017.69,429.12 L1018.50,429.12 L1019.31,429.12 L1020.12,436.46 L1020.92,452.73 L1021.73,504.49 L1022.54,538.14 L1023.35,554.08 L1024.15,554.14 L1024.96,554.16 L1025.77,555.35 L1026.58,563.76 L1027.39,572.37 L1028.19,579.17 L1029.00,579.17 L1029.81,593.94 L1030.62,612.04 L1031.43,626.73 L1032.23,629.19 L1033.04,629.19 L1033.85,629.19 L1034.66,629.19 L1035.47,629.19 L1036.27,629.19 L1037.08,629.19 L1037.89,629.19 L1038.70,629.19 L1039.50,629.19 L1040.31,631.49 L1041.12,636.62 L1041.93,649.89 L1042.74,654.20 L1043.54,655.31 L1044.35,660.50 L1045.16,670.75 L1045.97,679.21 L1046.78,679.21 L1047.58,679.21 L1048.39,687.38 L1049.20,709.71 L1050.01,722.60 L1050.81,729.23 L1051.62,729.23 L1052.43,729.23 L1053.24,729.23 L1054.05,729.23 L1054.85,729.23 L1055.66,729.23 L1056.47,729.23 L1057.28,729.23 L1058.09,729.23 L1058.89,729.23 L1059.70,729.23 L1060.51,729.23 L1061.32,729.23 L1062.12,729.23 L1062.93,729.23 L1063.74,728.80 L1064.55,727.61 L1065.36,728.56 L1066.16,729.23 L1066.97,729.23 L1067.78,729.23 L1068.59,729.23 L1069.40,729.23 L1070.20,729.23 L1071.01,720.32 L1071.82,706.89 L1072.63,704.89 L1073.43,704.22 L1074.24,704.22 L1075.05,704.22 L1075.86,700.81 L1076.67,694.00 L1077.47,681.48 L1078.28,679.21 L1079.09,679.21 L1079.90,679.21 L1080.71,679.21 L1081.51,679.21 L1082.32,679.21 L1083.13,679.21 L1083.94,679.21 L1084.74,679.21 L1085.55,679.21 L1086.36,679.21 L1087.17,679.21 L1087.98,679.21 L1088.78,679.21 L1089.59,679.21 L1090.40,679.21 L1091.21,679.21 L1092.02,679.21 L1092.82,679.21 L1093.63,679.21 L1094.44,679.21 L1095.25,679.21 L1096.05,679.21 L1096.86,679.21 L1097.67,679.21 L1098.48,679.21 L1099.29,679.21 L1100.09,679.21 L1100.90,679.21 L1101.71,679.21 L1102.52,679.21 L1103.33,679.21 L1104.13,679.21 L1104.94,679.21 L1105.75,679.21 L1106.56,679.21 L1107.36,679.21 L1108.17,679.21 L1108.98,679.21 L1109.79,679.21 L1110.60,679.21 L1111.40,679.21 L1112.21,679.21 L1113.02,679.21 L1113.83,679.21 L1114.64,679.21 L1115.44,679.21 L1116.25,679.21 L1117.06,679.21 L1117.87,679.21 L1118.67,679.21 L1119.48,679.21 L1120.29,679.21 L1121.10,679.21 L1121.91,679.21 L1122.71,679.21 L1123.52,679.21 L1124.33,679.21 L1125.14,679.21 L1125.95,679.21 L1126.75,679.21 L1127.56,679.21 L1128.37,679.21 L1129.18,679.21 L1129.99,679.21 L1130.79,679.21 L1131.60,679.21 L1132.41,679.21 L1133.22,679.21 L1134.02,679.21 L1134.83,679.21 L1135.64,679.21 L1136.45,679.21 L1137.26,679.21 L1138.06,679.21 L1138.87,679.21 L1139.68,679.21 L1140.49,679.21 L1141.30,679.21 L1142.10,679.21 L1142.91,679.21 L1143.72,679.21 L1144.53,679.21 L1145.33,682.85 L1146.14,690.32 L1146.95,700.03 L1147.76,704.22 L1148.57,704.22 L1149.37,704.22 L1150.18,704.22 L1150.99,704.22 L1151.80,704.22 L1152.61,715.11 L1153.41,726.82 L1154.22,728.83 L1155.03,729.23 L1155.84,729.23 L1156.64,729.23 L1157.45,733.24 L1158.26,741.09 L1159.07,753.61 L1159.88,754.24 L1160.68,754.24 L1161.49,754.24 L1162.30,754.24 L1163.11,754.24 L1163.92,754.24 L1164.72,754.24 L1165.53,754.24 L1166.34,754.24 L1167.15,754.24 L1167.95,754.24 L1168.76,754.24 L1169.57,754.24 L1170.38,754.24 L1171.19,754.24 L1171.99,754.24 L1172.80,754.24 L1173.61,754.24 L1174.42,754.24 L1175.23,754.24 L1176.03,754.24 L1176.84,754.24 L1177.65,754.24 L1178.46,754.24 L1179.26,754.24 L1180.07,754.24 L1180.88,754.24 L1181.69,754.24 L1182.50,754.24 L1183.30,754.24 L1184.11,754.24 L1184.92,754.24 L1185.73,754.24 L1186.54,754.24 L1187.34,754.24 L1188.15,754.24 L1188.96,754.24" stroke="#000" stroke-width="1.3" fill="none" stroke-linejoin="round"/>
<path d="M755.5,784.2 V778 H1209.6 V784.2" stroke="#000" stroke-width="1.3" fill="none"/>
<path d="M749.3,255.3 H755.5 V778.0 H749.3" stroke="#000" stroke-width="1.3" fill="none"/>
<path d="M777.76,778V784.2M812.25,778V784.2M846.75,778V784.2M881.24,778V784.2M915.73,778V784.2M950.23,778V784.2M984.72,778V784.2M1019.22,778V784.2M1053.71,778V784.2M1088.21,778V784.2M1122.70,778V784.2M1157.19,778V784.2M1191.69,778V784.2M749.3,754.24H755.5M749.3,706.35H755.5M749.3,658.46H755.5M749.3,610.57H755.5M749.3,562.69H755.5M749.3,514.80H755.5M749.3,466.91H755.5M749.3,419.02H755.5M749.3,371.13H755.5M749.3,323.24H755.5M749.3,275.35H755.5" stroke="#000" stroke-width="1.3" fill="none"/>
<text x="777.76" y="797.6" font-size="11.5" fill="#000" text-anchor="middle"  stroke="#000" stroke-width="0.3">0.5</text>
<text x="812.25" y="797.6" font-size="11.5" fill="#000" text-anchor="middle"  stroke="#000" stroke-width="0.3">1.0</text>
<text x="846.75" y="797.6" font-size="11.5" fill="#000" text-anchor="middle"  stroke="#000" stroke-width="0.3">1.5</text>
<text x="881.24" y="797.6" font-size="11.5" fill="#000" text-anchor="middle"  stroke="#000" stroke-width="0.3">2.0</text>
<text x="915.73" y="797.6" font-size="11.5" fill="#000" text-anchor="middle"  stroke="#000" stroke-width="0.3">2.5</text>
<text x="950.23" y="797.6" font-size="11.5" fill="#000" text-anchor="middle"  stroke="#000" stroke-width="0.3">3.0</text>
<text x="984.72" y="797.6" font-size="11.5" fill="#000" text-anchor="middle"  stroke="#000" stroke-width="0.3">3.5</text>
<text x="1019.22" y="797.6" font-size="11.5" fill="#000" text-anchor="middle"  stroke="#000" stroke-width="0.3">4.0</text>
<text x="1053.71" y="797.6" font-size="11.5" fill="#000" text-anchor="middle"  stroke="#000" stroke-width="0.3">4.5</text>
<text x="1088.21" y="797.6" font-size="11.5" fill="#000" text-anchor="middle"  stroke="#000" stroke-width="0.3">5.0</text>
<text x="1122.7" y="797.6" font-size="11.5" fill="#000" text-anchor="middle"  stroke="#000" stroke-width="0.3">5.5</text>
<text x="1157.19" y="797.6" font-size="11.5" fill="#000" text-anchor="middle"  stroke="#000" stroke-width="0.3">6.0</text>
<text x="1191.69" y="797.6" font-size="11.5" fill="#000" text-anchor="middle"  stroke="#000" stroke-width="0.3">6.5</text>
<text x="745.6" y="758.34" font-size="11.5" fill="#000" text-anchor="end"  stroke="#000" stroke-width="0.3">0.00</text>
<text x="745.6" y="710.45" font-size="11.5" fill="#000" text-anchor="end"  stroke="#000" stroke-width="0.3">0.05</text>
<text x="745.6" y="662.56" font-size="11.5" fill="#000" text-anchor="end"  stroke="#000" stroke-width="0.3">0.10</text>
<text x="745.6" y="614.67" font-size="11.5" fill="#000" text-anchor="end"  stroke="#000" stroke-width="0.3">0.15</text>
<text x="745.6" y="566.79" font-size="11.5" fill="#000" text-anchor="end"  stroke="#000" stroke-width="0.3">0.20</text>
<text x="745.6" y="518.9" font-size="11.5" fill="#000" text-anchor="end"  stroke="#000" stroke-width="0.3">0.25</text>
<text x="745.6" y="471.01" font-size="11.5" fill="#000" text-anchor="end"  stroke="#000" stroke-width="0.3">0.30</text>
<text x="745.6" y="423.12" font-size="11.5" fill="#000" text-anchor="end"  stroke="#000" stroke-width="0.3">0.35</text>
<text x="745.6" y="375.23" font-size="11.5" fill="#000" text-anchor="end"  stroke="#000" stroke-width="0.3">0.40</text>
<text x="745.6" y="327.34" font-size="11.5" fill="#000" text-anchor="end"  stroke="#000" stroke-width="0.3">0.45</text>
<text x="745.6" y="279.45" font-size="11.5" fill="#000" text-anchor="end"  stroke="#000" stroke-width="0.3">0.50</text>
<text x="981.5" y="818.7" font-size="11.5" fill="#000" font-weight="bold" text-anchor="middle"  stroke="#000" stroke-width="0.12">wt</text>
<text x="0" y="0" font-size="11.5" font-weight="bold" text-anchor="middle" transform="translate(722.7,515.8) rotate(-90)">density</text>
<rect x="707.5" y="151.5" width="523" height="90" rx="4" fill="#f5f5f5" stroke="#e3e3e3" stroke-width="1"/>
<text x="716.3" y="174.7" font-size="14" fill="#222" textLength="43" lengthAdjust="spacingAndGlyphs"  stroke="#222" stroke-width="0.3">Kernel</text>
<text x="967" y="174.5" font-size="14" fill="#222" textLength="150" lengthAdjust="spacingAndGlyphs"  stroke="#222" stroke-width="0.3">Bandwidth adjustment</text>
<rect x="715" y="184" width="224" height="41" rx="5" fill="none" stroke="#9cc8ef" stroke-width="3" opacity="0.55" filter="url(#glow)"/>
<rect x="716.5" y="185.5" width="221" height="38" rx="4" fill="#fff" stroke="#74b2ea" stroke-width="1.2"/>
<text x="727.8" y="210.2" font-size="14" fill="#222" textLength="82.2" lengthAdjust="spacingAndGlyphs"  stroke="#222" stroke-width="0.3">Rectangular</text>
<path d="M910.2,206.6 L920.6,206.6 L915.4,200.6 Z" fill="#000"/>
<text x="968.5" y="199.2" font-size="9.5" fill="#999" textLength="13.4" lengthAdjust="spacingAndGlyphs"  stroke="#999" stroke-width="0.05">0.1</text>
<text x="1071.7" y="199.2" font-size="9.5" fill="#333" text-anchor="middle"  stroke="#333" stroke-width="0.05">1</text>
<text x="1183.4" y="199.2" font-size="9.5" fill="#999" text-anchor="middle"  stroke="#999" stroke-width="0.05">2</text>
<rect x="966.4" y="207.6" width="222" height="5.6" rx="2.8" fill="url(#gSlider)" stroke="#8a8a8a" stroke-width="0.6"/>
<path d="M967.00,217.8V222.8M979.43,217.8V222.8M991.86,217.8V222.8M1004.29,217.8V222.8M1016.72,217.8V222.8M1029.15,217.8V222.8M1041.58,217.8V222.8M1054.01,217.8V222.8M1066.44,217.8V222.8M1078.87,217.8V222.8M1091.30,217.8V222.8M1103.73,217.8V222.8M1116.16,217.8V222.8M1128.59,217.8V222.8M1141.02,217.8V222.8M1153.45,217.8V222.8M1165.88,217.8V222.8M1178.31,217.8V222.8M1190.74,217.8V222.8" stroke="#999" stroke-width="1"/>
<path d="M1066.2,207 Q1066.2,204.6 1068.6,204.6 H1074.8 Q1077.2,204.6 1077.2,207 V212 L1071.7,217.6 L1066.2,212 Z" fill="url(#gHandle)" stroke="#4a88c8" stroke-width="0.8"/>
<path d="M1244.98,153.17 L1245.10,154.38 L1243.41,155.28 L1243.16,156.14 L1244.07,157.83 L1243.30,158.77 L1241.47,158.22 L1240.68,158.64 L1240.13,160.48 L1238.92,160.60 L1238.02,158.91 L1237.16,158.66 L1235.47,159.57 L1234.53,158.80 L1235.08,156.97 L1234.66,156.18 L1232.82,155.63 L1232.70,154.42 L1234.39,153.52 L1234.64,152.66 L1233.73,150.97 L1234.50,150.03 L1236.33,150.58 L1237.12,150.16 L1237.67,148.32 L1238.88,148.20 L1239.78,149.89 L1240.64,150.14 L1242.33,149.23 L1243.27,150.00 L1242.72,151.83 L1243.14,152.62 Z M1241.1000000000001,154.4 A2.2,2.2 0 1 0 1236.7,154.4 A2.2,2.2 0 1 0 1241.1000000000001,154.4 Z" fill="#b8b8b8" fill-rule="evenodd"/>
<rect x="718" y="228" width="221" height="205" rx="4" fill="#000" opacity="0.10"/>
<rect x="716.5" y="226.5" width="220.5" height="204.5" rx="4" fill="#fff" stroke="#d5d5d5" stroke-width="1"/>
<rect x="717" y="287" width="220" height="27.5" fill="url(#gSel)"/>
<text x="727.7" y="250.7" font-size="14" fill="#222" textLength="62.7" lengthAdjust="spacingAndGlyphs"  stroke="#222" stroke-width="0.3">Gaussian</text>
<text x="727.7" y="278.4" font-size="14" fill="#222" textLength="95.2" lengthAdjust="spacingAndGlyphs"  stroke="#222" stroke-width="0.3">Epanechnikov</text>
<text x="727.7" y="306.1" font-size="14" fill="#fff" textLength="82.8" lengthAdjust="spacingAndGlyphs"  stroke="#fff" stroke-width="0.3">Rectangular</text>
<text x="727.7" y="333.8" font-size="14" fill="#222" textLength="66.2" lengthAdjust="spacingAndGlyphs"  stroke="#222" stroke-width="0.3">Triangular</text>
<text x="727.7" y="361.5" font-size="14" fill="#222" textLength="58.3" lengthAdjust="spacingAndGlyphs"  stroke="#222" stroke-width="0.3">Biweight</text>
<text x="727.7" y="389.2" font-size="14" fill="#222" textLength="45.9" lengthAdjust="spacingAndGlyphs"  stroke="#222" stroke-width="0.3">Cosine</text>
<text x="727.7" y="416.9" font-size="14" fill="#222" textLength="68.1" lengthAdjust="spacingAndGlyphs"  stroke="#222" stroke-width="0.3">Optcosine</text>
<rect x="634.5" y="74.7" width="13.7" height="4.5" rx="1" fill="#fafafa" stroke="#8c8c8c" stroke-width="1"/><path d="M634,76.8 V75.4 Q634,74.2 635.2,74.2 H647.5 Q648.7,74.2 648.7,75.4 V76.8 Z" fill="#8c8c8c"/>
<rect x="653.9" y="68.3" width="13.3" height="10.8" fill="#f4f4f5" stroke="#8c8c8c" stroke-width="1.2"/><rect x="653.3" y="67.7" width="14.5" height="2.4" fill="#8c8c8c"/>
<path d="M264.40000000000003,65.6 H272.0 L275.40000000000003,69 V80.6 H264.40000000000003 Z" fill="#fff" stroke="#8d8d8d" stroke-width="0.9"/>
<path d="M272.0,65.6 V69 H275.40000000000003" fill="none" stroke="#8d8d8d" stroke-width="0.7"/>
<circle cx="264.6" cy="73.4" r="3.9" fill="#3b7dc8" stroke="#fff" stroke-width="0.6"/>
<text x="264.6" y="75.9" font-size="6.5" font-weight="bold" fill="#fff" text-anchor="middle" stroke="#fff" stroke-width="0.05">R</text>
<path d="M338.6,65.6 H346.2 L349.6,69 V80.6 H338.6 Z" fill="#fff" stroke="#8d8d8d" stroke-width="0.9"/>
<path d="M346.2,65.6 V69 H349.6" fill="none" stroke="#8d8d8d" stroke-width="0.7"/>
<circle cx="338.8" cy="73.4" r="3.9" fill="#3b7dc8" stroke="#fff" stroke-width="0.6"/>
<text x="338.8" y="75.9" font-size="6.5" font-weight="bold" fill="#fff" text-anchor="middle" stroke="#fff" stroke-width="0.05">R</text>
<path d="M262.2,99.6 L269.2,93 V96.6 H277 V102.6 H269.2 V106.2 Z" fill="#f3f3f3" stroke="#bdbdbd" stroke-width="1"/>
<path d="M299.4,99.6 L292.4,93 V96.6 H285 V102.6 H292.4 V106.2 Z" fill="#f6f6f6" stroke="#d8d8d8" stroke-width="1"/>
<rect x="309.5" y="92" width="1" height="15" fill="#c9cacd"/><rect x="310.5" y="92" width="1" height="15" fill="#fbfbfb"/>
<rect x="321.2" y="93.4" width="13.3" height="12.6" rx="1.6" fill="#d3e2f0" stroke="#c6d8ea" stroke-width="0.6"/><rect x="323.2" y="94.80000000000001" width="9.3" height="4.79" fill="#f4f8fc"/><rect x="324.0" y="100.96" width="7.70" height="5.04" fill="#f4f8fc"/><rect x="325.4" y="101.72" width="1.6" height="3.78" fill="#d3e2f0"/>
<rect x="346.8" y="92" width="1" height="15" fill="#c9cacd"/><rect x="347.8" y="92" width="1" height="15" fill="#fbfbfb"/>
<path d="M366.5,101.2 L372.2,106.2" stroke="#8a4d1f" stroke-width="2.6" stroke-linecap="round"/>
<circle cx="363.2" cy="97.6" r="4.9" fill="#d9ecfb" stroke="#3d6fa7" stroke-width="1.4"/>
<ellipse cx="365" cy="106.6" rx="6" ry="0.9" fill="#888" opacity="0.35"/>
<path d="M386.2,105.6 L398.6,94.6" stroke="#2c2c2c" stroke-width="2.8" stroke-linecap="round"/>
<path d="M386.2,105.6 L388.8,103.3" stroke="#4b93d6" stroke-width="2.8" stroke-linecap="round"/>
<path d="M399.6,89.8 V92.2 M403.4,93.4 H401 M402.4,90.8 L400.8,92.4 M396,90.8 L397.4,92.2 M402.6,96.8 L401,95.4" stroke="#ee8b5a" stroke-width="1"/>
<ellipse cx="394" cy="106.8" rx="7" ry="0.9" fill="#777" opacity="0.35"/>
<path d="M407.90,97.70 H413.30 L410.60,101.10 Z" fill="#000"/>
<rect x="421.3" y="92" width="1" height="15" fill="#c9cacd"/><rect x="422.3" y="92" width="1" height="15" fill="#fbfbfb"/>
<rect x="434.6" y="92.8" width="14.6" height="11.8" rx="1" fill="#f7f8fb" stroke="#9aa3ad" stroke-width="0.9"/>
<path d="M436,95.6 H448.6 M436,98 H448.6 M436,100.4 H448.6 M436,102.8 H448.6" stroke="#b9d3ee" stroke-width="0.6"/>
<path d="M438.2,93 V104.4" stroke="#e6a2a2" stroke-width="0.6"/>
<path d="M433.2,94.2 H435.6 M433.2,96.4 H435.6 M433.2,98.6 H435.6 M433.2,100.8 H435.6 M433.2,103 H435.6" stroke="#555" stroke-width="0.7"/>
<path d="M544.4,102 A5.1,5.1 0 1 1 543.4,95.9" fill="none" stroke="#149a43" stroke-width="3.3" stroke-linecap="round"/>
<path d="M541.4,98.9 L547.4,98.9 L547.2,92.6 Z" fill="#149a43"/>
<rect x="632.0" y="91.5" width="1" height="15.5" fill="#c9cacd"/><rect x="633.0" y="91.5" width="1" height="15.5" fill="#fbfbfb"/>
<rect x="643" y="94.8" width="14" height="11.2" rx="2.4" fill="#eef2f7" stroke="#8d9bab" stroke-width="0.9"/>
<path d="M643.5,97.6 Q643.5,95.2 645.6,95.2 H654.4 Q656.5,95.2 656.5,97.6 V98.4 H643.5 Z" fill="#c8def3"/>
<path d="M663.40,97.90 H669.00 L666.20,101.30 Z" fill="#000"/>
<ellipse cx="612.6" cy="546.6" rx="5.60" ry="1.3" fill="#6b7b80" opacity="0.45"/><path d="M618.57,542.58 L614.78,546.37 L609.42,546.37 L605.63,542.58 L605.63,537.22 L609.42,533.43 L614.78,533.43 L618.57,537.22 Z" fill="url(#gStop)" stroke="#a5101c" stroke-width="0.6"/><text x="612.1" y="541.9" font-size="5" fill="#f0b8bd" stroke="none" opacity="0.8" text-anchor="middle" font-family='"Liberation Sans",sans-serif'>STOP</text>
<rect x="634.5" y="541.1" width="13.7" height="4.9" rx="1" fill="#fafafa" stroke="#8c8c8c" stroke-width="1"/><path d="M634,543.2 V541.8000000000001 Q634,540.6 635.2,540.6 H647.5 Q648.7,540.6 648.7,541.8000000000001 V543.2 Z" fill="#8c8c8c"/>
<rect x="653.6" y="535.4" width="13.5" height="10.5" fill="#f4f4f5" stroke="#8c8c8c" stroke-width="1.2"/><rect x="653" y="534.8" width="14.7" height="2.4" fill="#8c8c8c"/>
<rect x="1215.3" y="68.39999999999999" width="10" height="8.2" fill="#f4f4f5" stroke="#8c8c8c" stroke-width="1.2"/><rect x="1214.7" y="67.8" width="11.2" height="2" fill="#8c8c8c"/><rect x="1211.3" y="71.2" width="10.4" height="8.4" fill="#f4f4f5" stroke="#8c8c8c" stroke-width="1.2"/><rect x="1210.7" y="70.6" width="11.6" height="2" fill="#8c8c8c"/>
<rect x="1230.5" y="68.19999999999999" width="13.5" height="10.9" fill="#f4f4f5" stroke="#8c8c8c" stroke-width="1.2"/><rect x="1229.9" y="67.6" width="14.7" height="2.4" fill="#8c8c8c"/>
<rect x="1210.8" y="109.4" width="13.9" height="4.6" rx="1" fill="#fafafa" stroke="#8c8c8c" stroke-width="1"/><path d="M1210.3,111.5 V110.10000000000001 Q1210.3,108.9 1211.5,108.9 H1224.0 Q1225.2,108.9 1225.2,110.10000000000001 V111.5 Z" fill="#8c8c8c"/>
<rect x="1234.5" y="103.19999999999999" width="10" height="8.2" fill="#f4f4f5" stroke="#8c8c8c" stroke-width="1.2"/><rect x="1233.9" y="102.6" width="11.2" height="2" fill="#8c8c8c"/><rect x="1230.5" y="106.0" width="10.4" height="8.4" fill="#f4f4f5" stroke="#8c8c8c" stroke-width="1.2"/><rect x="1229.9" y="105.39999999999999" width="11.6" height="2" fill="#8c8c8c"/>
<ellipse cx="1170.9" cy="138.9" rx="5.84" ry="1.3" fill="#6b7b80" opacity="0.45"/><path d="M1177.14,134.69 L1173.19,138.64 L1167.61,138.64 L1163.66,134.69 L1163.66,129.11 L1167.61,125.16 L1173.19,125.16 L1177.14,129.11 Z" fill="url(#gStop)" stroke="#a5101c" stroke-width="0.6"/><text x="1170.4" y="133.9" font-size="5" fill="#f0b8bd" stroke="none" opacity="0.8" text-anchor="middle" font-family='"Liberation Sans",sans-serif'>STOP</text>
<rect x="1185.9" y="124.3" width="1" height="15.200000000000003" fill="#c9cacd"/><rect x="1186.9" y="124.3" width="1" height="15.200000000000003" fill="#fbfbfb"/>
<ellipse cx="1207" cy="139.6" rx="7" ry="0.9" fill="#7a8694" opacity="0.35"/>
<path d="M1200.6,129.4 Q1200.6,127.3 1202.6,127.3 H1210.6 Q1212.6,127.3 1212.6,129.4 V139 H1200.6 Z" fill="#fff" stroke="#8c9aab" stroke-width="1"/>
<rect x="1201.1" y="127.8" width="11" height="2.8" fill="#c6e0f7"/>
<path d="M1196.6,137.4 L1200.4,133.6 L1199,132.2 H1203.8 V137 L1202.4,135.6 L1198.6,139.4 Z" fill="#fff" stroke="#7d8da0" stroke-width="0.9" stroke-linejoin="round"/>
<rect x="1221.0" y="124.3" width="1" height="15.200000000000003" fill="#c9cacd"/><rect x="1222.0" y="124.3" width="1" height="15.200000000000003" fill="#fbfbfb"/>
<path d="M1242.5,134.6 A5.4,5.4 0 1 1 1240.5,127.2" fill="none" stroke="#8d9db0" stroke-width="5.2"/>
<path d="M1242.5,134.6 A5.4,5.4 0 1 1 1240.5,127.2" fill="none" stroke="#e6eef7" stroke-width="3.2"/>
<path d="M1238.4,132.6 L1245.5,132.6 L1245.5,124.5 Z" fill="#e6eef7" stroke="#8d9db0" stroke-width="1" stroke-linejoin="round"/>
</svg>
</body></html>
